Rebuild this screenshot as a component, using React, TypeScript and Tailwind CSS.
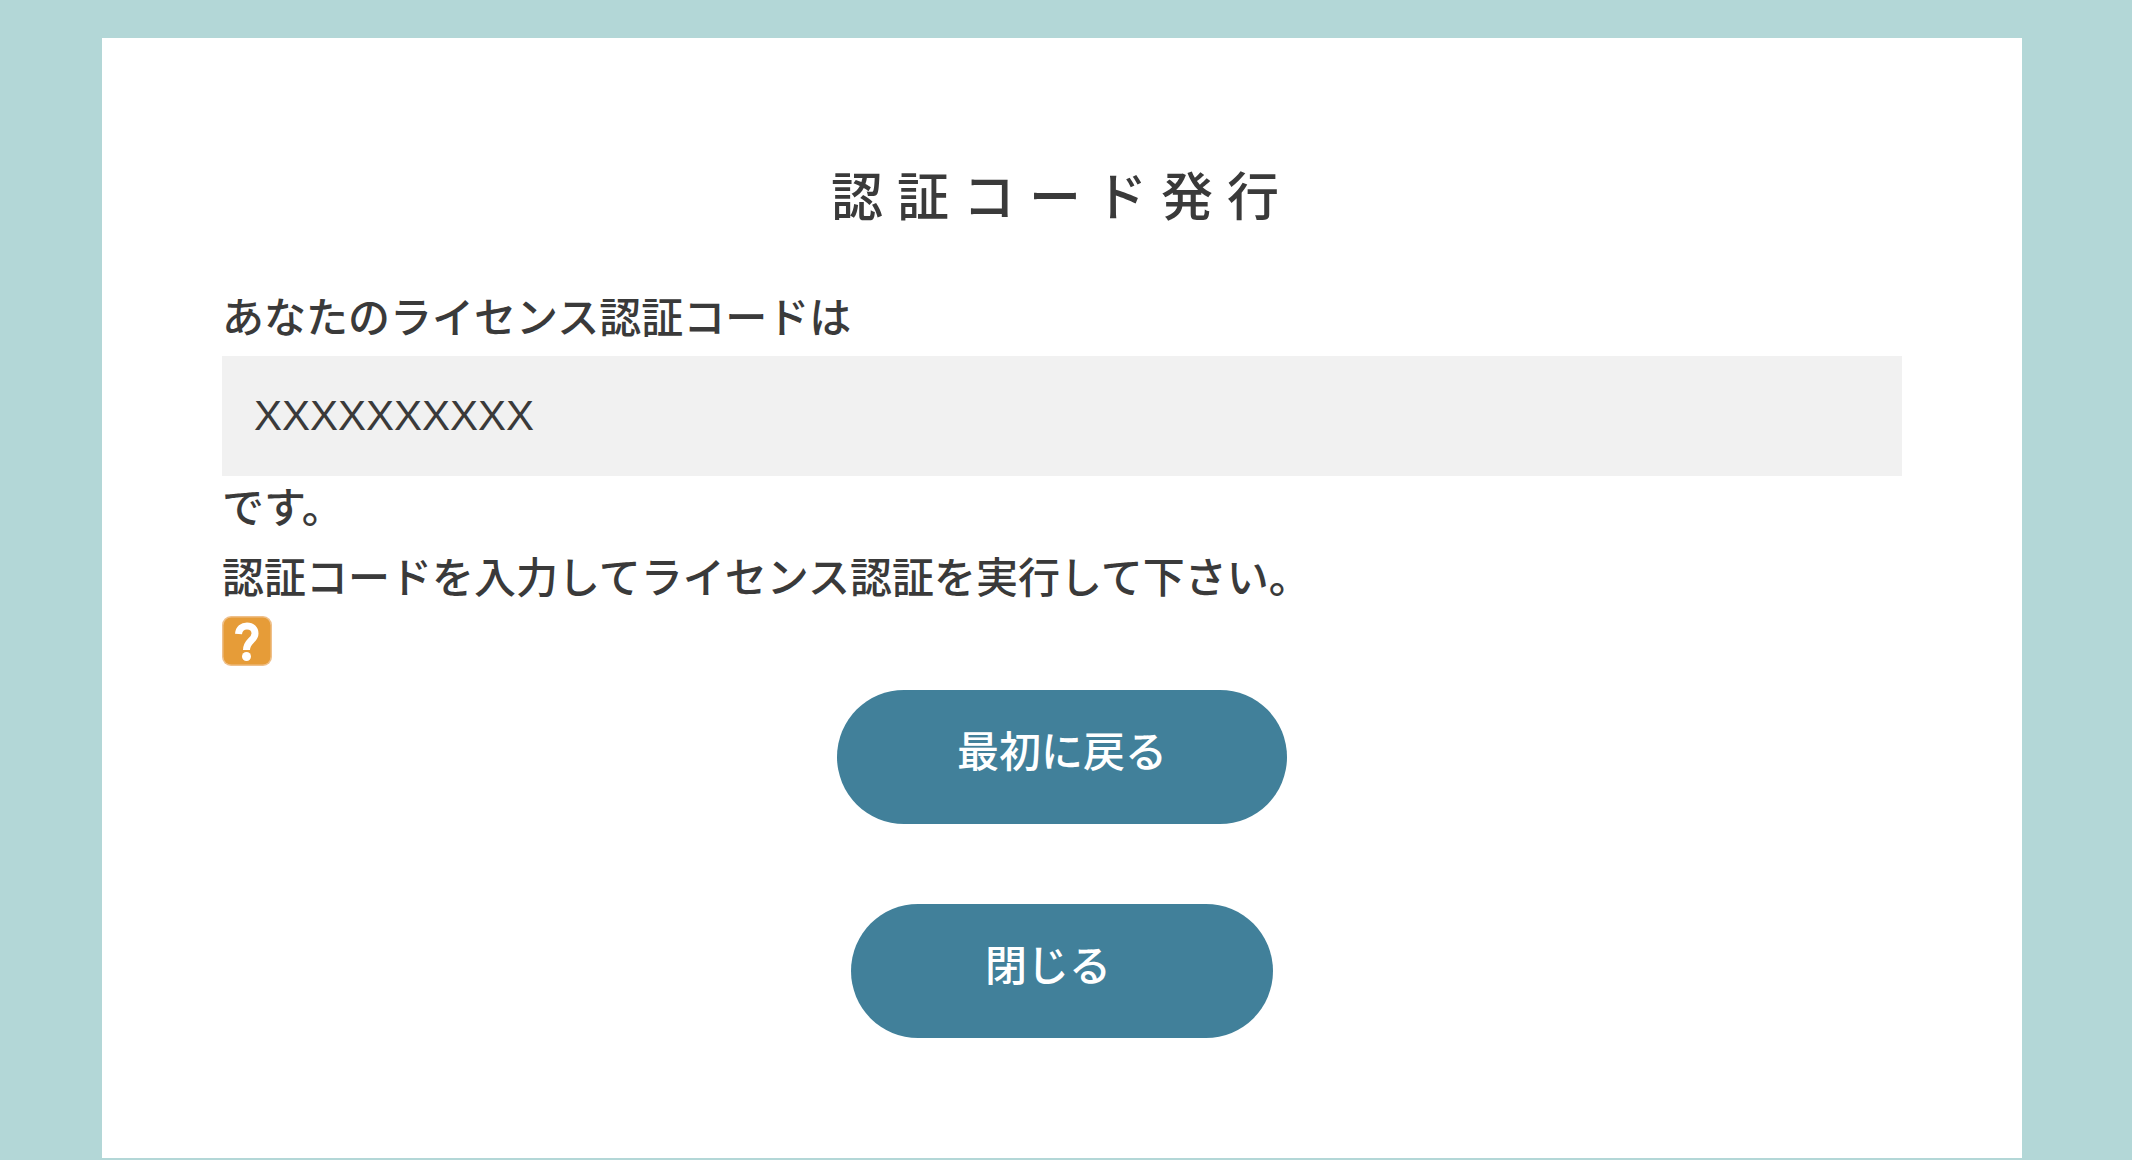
const LICENSE_CODE = "XXXXXXXXXX";

function HelpIcon() {
  return (
    <svg className="h-[50px] w-[50px]" viewBox="0 0 50 50" fill="none" aria-hidden="true">
      <rect width="50" height="50" rx="9" fill="#efc08a" />
      <rect x="1.5" y="1.5" width="47" height="47" rx="8" fill="#e69c38" />
      <path
        d="M16.5 18C17 12.5 20.5 10 25 10C30 10 33 13 33 17.5C33 24.5 24.5 25 24.5 34"
        stroke="#fff"
        strokeWidth="7"
      />
      <circle cx="24.5" cy="40.5" r="4.5" fill="#fff" />
    </svg>
  );
}

export default function App() {
  return (
    <div className="min-h-screen bg-[#b3d7d7] pt-[38px] pr-[110px] pb-0.5 pl-[102px] font-['Liberation_Sans','Noto_Sans_CJK_JP',sans-serif] text-[42px] leading-[66px] font-medium text-[#3a3a3a]">
      <main className="bg-white p-[120px]">
        <h1 className="mb-12 text-center text-[52px] leading-[80px] tracking-[14px]">
          認証コード発行
        </h1>

        <label htmlFor="license-code" className="block pb-1">
          あなたのライセンス認証コードは
        </label>
        <input
          id="license-code"
          type="text"
          readOnly
          value={LICENSE_CODE}
          className="block h-[120px] w-full bg-[#f1f1f1] px-8 font-normal outline-none"
        />
        <p className="pb-1">です。</p>
        <p className="pb-1">認証コードを入力してライセンス認証を実行して下さい。</p>

        <a href="#help" aria-label="ヘルプ" className="block w-fit">
          <HelpIcon />
        </a>

        {/* Actions */}
        <div className="mt-6 flex flex-col items-center gap-20 text-white">
          <button type="button" className="h-[134px] rounded-full bg-[#41809a] px-[120px] pb-2">
            最初に戻る
          </button>
          <button
            type="button"
            className="h-[134px] rounded-full bg-[#41809a] pr-[162px] pb-2 pl-[134px]"
          >
            閉じる
          </button>
        </div>
      </main>
    </div>
  );
}
